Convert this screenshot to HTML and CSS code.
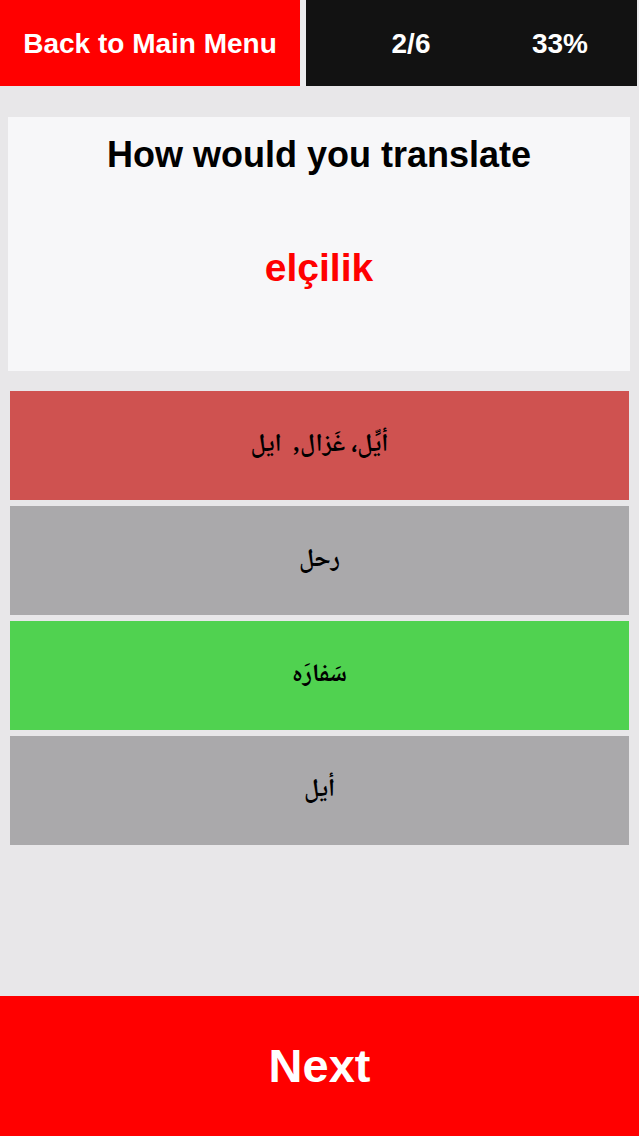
FILE: index.html
```html
<!DOCTYPE html>
<html lang="en">
<head>
<meta charset="utf-8">
<title>Quiz</title>
<link rel="stylesheet" href="styles.css">
</head>
<body>
<div class="screen">
  <header class="topbar">
    <div class="back">Back to Main Menu</div>
    <div class="status">
      <span class="stat count">2/6</span>
      <span class="stat pct">33%</span>
    </div>
  </header>
  <main class="content">
    <section class="question">
      <div class="prompt">How would you translate</div>
      <div class="word">elçilik</div>
    </section>
    <section class="answers">
      <div class="answer wrong" dir="rtl">أيِّل، غَزال,  ايل</div>
      <div class="answer neutral" dir="rtl">رحل</div>
      <div class="answer right" dir="rtl">سَفارَه</div>
      <div class="answer neutral" dir="rtl">أيل</div>
    </section>
  </main>
  <footer class="next">Next</footer>
</div>
</body>
</html>
```

FILE: styles.css
```css
html, body {
  margin: 0;
  padding: 0;
}
body {
  background: #e8e7e9;
  font-family: "Liberation Sans", Arial, sans-serif;
}
.screen {
  width: 639px;
  min-height: 1136px;
  display: flex;
  flex-direction: column;
}
.topbar {
  height: 86px;
  display: flex;
  gap: 6px;
  padding-right: 2px;
  background: #ececee;
}
.back {
  width: 300px;
  background: #ff0000;
  color: #fff;
  font-weight: bold;
  font-size: 28px;
  line-height: 32px;
  display: flex;
  align-items: center;
  justify-content: center;
  padding-top: 2px;
  box-sizing: border-box;
}
.status {
  flex: 1;
  background: #121212;
  display: flex;
  align-items: center;
  padding-left: 45px;
  padding-top: 2px;
  gap: 29px;
}
.stat {
  width: 120px;
  text-align: center;
  color: #fff;
  font-weight: bold;
  font-size: 28px;
  line-height: 32px;
}
.content {
  flex: 1;
  padding-top: 31px;
}
.question {
  margin: 0 9px 0 8px;
  height: 254px;
  box-sizing: border-box;
  background: #f7f7f9;
  padding-top: 16px;
  text-align: center;
}
.prompt {
  font-weight: bold;
  font-size: 36px;
  line-height: 44px;
  color: #000;
}
.word {
  margin-top: 67px;
  font-weight: bold;
  font-size: 39px;
  line-height: 47px;
  color: #ff0000;
}
.answers {
  margin: 20px 10px 0 10px;
  display: flex;
  flex-direction: column;
  gap: 6px;
}
.answer {
  height: 109px;
  display: flex;
  align-items: center;
  justify-content: center;
  font-family: "Noto Naskh Arabic", "Noto Sans Arabic", "DejaVu Sans", sans-serif;
  font-weight: bold;
  font-size: 25px;
  color: #000;
  white-space: pre;
}
.wrong { background: #cf5250; }
.neutral { background: #aaa9ab; }
.right { background: #50d250; }
.next {
  height: 140px;
  background: #ff0000;
  color: #fff;
  font-weight: bold;
  font-size: 47px;
  line-height: 56px;
  display: flex;
  align-items: center;
  justify-content: center;
}
```
